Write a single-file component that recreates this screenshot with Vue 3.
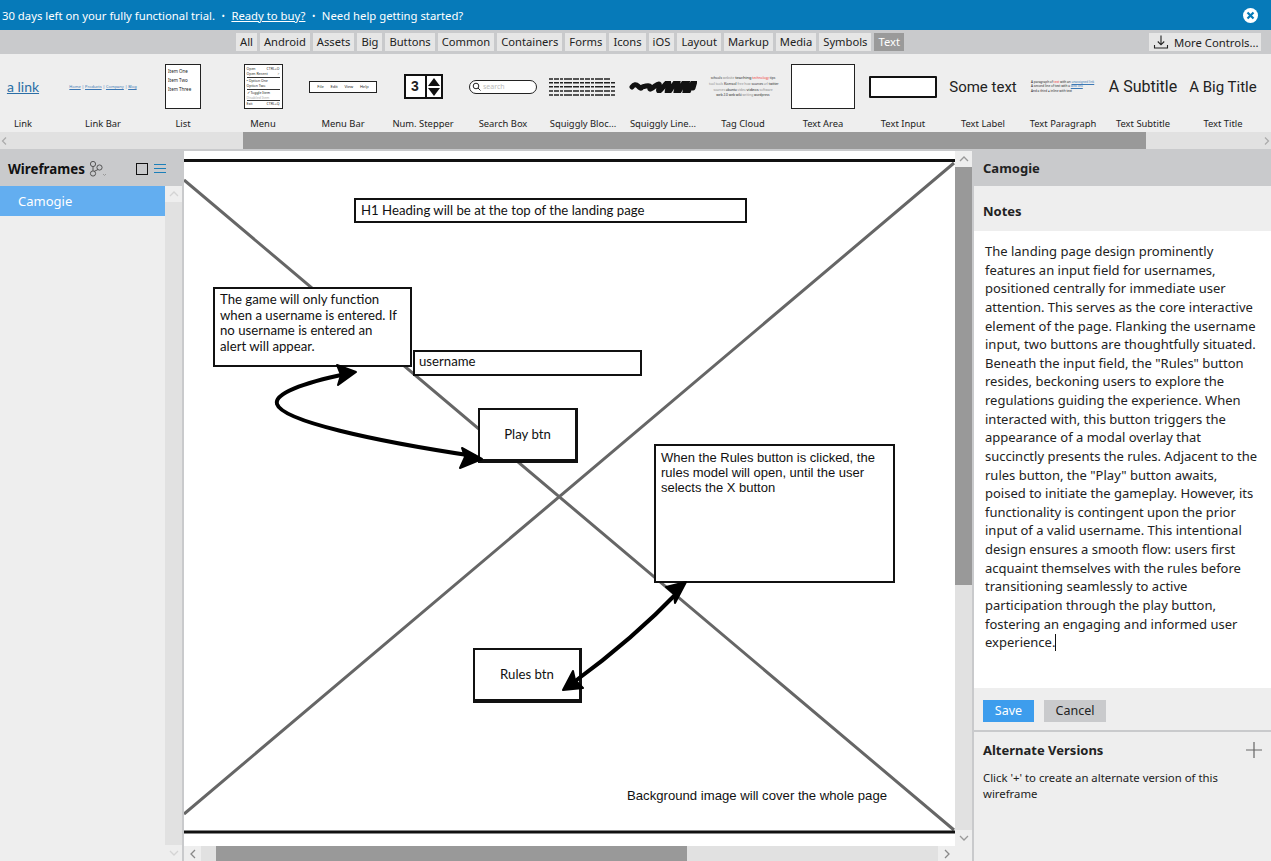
<template>
  <div class="app">
    <div class="banner">
      <span>30 days left on your fully functional trial.</span>
      <span class="dot">•</span>
      <a class="buy">Ready to buy?</a>
      <span class="dot">•</span>
      <span>Need help getting started?</span>
      <svg class="close" width="15" height="15" viewBox="0 0 15 15">
        <circle cx="7.5" cy="7.5" r="7.5" fill="#fff" />
        <path d="M4.5 4.5l6 6M10.5 4.5l-6 6" stroke="#067ab9" stroke-width="2.2" />
      </svg>
    </div>

    <div class="tabs">
      <div class="chips">
        <span v-for="t in tabs" :key="t" class="chip" :class="{ on: t === 'Text' }">{{ t }}</span>
      </div>
      <div class="more">
        <svg width="16" height="16" viewBox="0 0 16 16" fill="none" stroke="#222" stroke-width="1.1">
          <path d="M8 1.5v9M4.8 7.5L8 10.8l3.2-3.3M1.5 11v3h13v-3" />
        </svg>
        <span>More Controls...</span>
      </div>
    </div>

    <div class="gallery">
      <div class="cell">
        <div class="thumb"><span class="tlink">a link</span></div>
        <div class="name">Link</div>
      </div>
      <div class="cell">
        <div class="thumb"><span class="tlinkbar"><u>Home</u> | <u>Products</u> | <u>Company</u> | <u>Blog</u></span></div>
        <div class="name">Link Bar</div>
      </div>
      <div class="cell">
        <div class="thumb">
          <div class="tlist"><div>Item One</div><div>Item Two</div><div>Item Three</div></div>
        </div>
        <div class="name">List</div>
      </div>
      <div class="cell">
        <div class="thumb">
          <div class="tmenu">
            <div><span>Open</span><span>CTRL+O</span></div>
            <div class="rule"><span>Open Recent</span><span>&gt;</span></div>
            <div><span>• Option One</span></div>
            <div class="rule"><span>Option Two</span></div>
            <div><span>✓ Toggle Item</span></div>
            <div class="rule dim"><span>Disabled Item</span></div>
            <div><span>Exit</span><span>CTRL+Q</span></div>
          </div>
        </div>
        <div class="name">Menu</div>
      </div>
      <div class="cell">
        <div class="thumb">
          <div class="tmenubar"><span>File</span><span>Edit</span><span>View</span><span>Help</span></div>
        </div>
        <div class="name">Menu Bar</div>
      </div>
      <div class="cell">
        <div class="thumb">
          <div class="tstep">
            <span class="num">3</span>
            <svg width="14" height="20" viewBox="0 0 14 20"><path d="M7 1l6 8H1zM7 19l6-8H1z" fill="#111" /></svg>
          </div>
        </div>
        <div class="name">Num. Stepper</div>
      </div>
      <div class="cell">
        <div class="thumb">
          <div class="tsearch">
            <svg width="9" height="9" viewBox="0 0 9 9" fill="none" stroke="#222" stroke-width="1"><circle cx="4" cy="4" r="2.8" /><path d="M6 6l2.5 2.5" /></svg>
            <span>search</span>
          </div>
        </div>
        <div class="name">Search Box</div>
      </div>
      <div class="cell">
        <div class="thumb">
          <svg width="68" height="18" viewBox="0 0 68 18" fill="none" stroke="#222" stroke-width="1.4" stroke-dasharray="4 1 5 1 3 1 8 1 6 1">
            <path d="M0 1h62M0 4.700h67M0 8.700h66M0 13h66M0 17h67" />
          </svg>
        </div>
        <div class="name">Squiggly Bloc...</div>
      </div>
      <div class="cell">
        <div class="thumb">
          <svg width="68" height="12" viewBox="0 0 68 12" fill="none" stroke="#111" stroke-width="5" stroke-linecap="round">
            <path d="M3 6q3-4 6-1t3 2 5-2 4 2 5-2 4 2 5-2 4 2 5-2 4 2 5-2 4 2 4 0 3 0" />
          </svg>
        </div>
        <div class="name">Squiggly Line...</div>
      </div>
      <div class="cell">
        <div class="thumb">
          <div class="ttags">
            <div>schools <i>website</i> <b>teaching</b> <em>technology</em> tips</div>
            <div><i>tool</i> <i>tools</i> <b>Konsol</b> <i>free</i> <i>how</i> sources <i>url</i> twitter</div>
            <div><i>sources</i> ubuntu <i>video</i> <b>videos</b> <i>software</i></div>
            <div>web 2.0 web wiki <i>writing</i> wordpress</div>
          </div>
        </div>
        <div class="name">Tag Cloud</div>
      </div>
      <div class="cell">
        <div class="thumb"><div class="tarea"></div></div>
        <div class="name">Text Area</div>
      </div>
      <div class="cell">
        <div class="thumb"><div class="tinput"></div></div>
        <div class="name">Text Input</div>
      </div>
      <div class="cell">
        <div class="thumb"><span class="tbig">Some text</span></div>
        <div class="name">Text Label</div>
      </div>
      <div class="cell">
        <div class="thumb">
          <div class="tpara">
            <div>A paragraph of <em>text</em> with an <u>unassigned link</u></div>
            <div>A second line of text with a <u>web link</u></div>
            <div>And a third ● inline with text</div>
          </div>
        </div>
        <div class="name">Text Paragraph</div>
      </div>
      <div class="cell">
        <div class="thumb"><span class="tbig sub">A Subtitle</span></div>
        <div class="name">Text Subtitle</div>
      </div>
      <div class="cell">
        <div class="thumb"><span class="tbig">A Big Title</span></div>
        <div class="name">Text Title</div>
      </div>
    </div>

    <div class="hbar gallerybar">
      <svg class="arrow" width="10" height="10" viewBox="0 0 10 10"><path d="M6 1.5L2.5 5 6 8.5" fill="none" stroke="#aaa" stroke-width="1.2" /></svg>
      <div class="gap-a"></div>
      <div class="thumbbar"></div>
      <div class="gap-b"></div>
      <svg class="arrow" width="10" height="10" viewBox="0 0 10 10"><path d="M4 1.500L7.500 5 4 8.500" fill="none" stroke="#aaa" stroke-width="1.2" /></svg>
    </div>

    <div class="main">
      <aside class="left">
        <div class="lhead">
          <span class="ltitle">Wireframes</span>
          <svg class="branch" width="18" height="18" viewBox="0 0 18 18" fill="none" stroke="#555" stroke-width="1">
            <circle cx="4" cy="4" r="2.6" /><circle cx="4" cy="13.5" r="2.6" /><circle cx="10.5" cy="7.5" r="2.6" />
            <path d="M4 6.6v4.3M5 11.5L9 9.5" /><path d="M14 14l1.5 1.5L17 14" stroke="#999" />
          </svg>
          <span class="square"></span>
          <span class="burger"><i></i><i></i><i></i></span>
        </div>
        <div class="lbody">
          <div class="llist">
            <div class="litem">Camogie</div>
          </div>
          <div class="vbar">
            <div class="vbtn"><svg width="10" height="8" viewBox="0 0 10 8"><path d="M1 6l4-4 4 4" fill="none" stroke="#d4d4d4" stroke-width="1.3" /></svg></div>
            <div class="vfill"></div>
            <div class="vbtn"><svg width="10" height="8" viewBox="0 0 10 8"><path d="M1 2l4 4 4-4" fill="none" stroke="#d4d4d4" stroke-width="1.3" /></svg></div>
          </div>
        </div>
      </aside>

      <section class="center">
        <div class="upper">
          <div class="canvas">
            <svg class="drawing" width="771" height="695" viewBox="0 0 771 695" fill="none">
              <path d="M0 29L770 679M0 663L770 12" stroke="#666" stroke-width="3" />
              <path d="M0 9.500H771M0 681H771" stroke="#111" stroke-width="3" />
            </svg>

            <div class="box h1box">H1 Heading will be at the top of the landing page</div>
            <div class="box gamebox">The game will only function<br />when a username is entered. If<br />no username is entered an<br />alert will appear.</div>
            <div class="box userbox">username</div>
            <div class="box btnbox playbox">Play btn</div>
            <div class="box btnbox rulesbox">Rules btn</div>
            <div class="box notebox">When the Rules button is clicked, the<br />rules model will open, until the user<br />selects the X button</div>
            <div class="bgnote">Background image will cover the whole page</div>

            <svg class="drawing" width="771" height="695" viewBox="0 0 771 695" fill="none">
              <path d="M162 223C118 232 90 243 93 253C98 270 190 290 290 305" stroke="#000" stroke-width="4" stroke-linecap="round" />
              <path d="M172 221L153 214L157 224L154 234Z" fill="#000" stroke="#000" stroke-width="2" stroke-linejoin="round" />
              <path d="M298 308L278 297L281 306L276 317Z" fill="#000" stroke="#000" stroke-width="2" stroke-linejoin="round" />
              <path d="M390 531Q449 488 495 440" stroke="#000" stroke-width="4" />
              <path d="M502 431L482 436L490 443L491 452Z" fill="#000" stroke="#000" stroke-width="2" stroke-linejoin="round" />
              <path d="M379 539L399 537L391 529L389 520Z" fill="#000" stroke="#000" stroke-width="2" stroke-linejoin="round" />
            </svg>
          </div>
          <div class="vbar canvasbar">
            <div class="vbtn"><svg width="10" height="8" viewBox="0 0 10 8"><path d="M1 6l4-4 4 4" fill="none" stroke="#999" stroke-width="1.300" /></svg></div>
            <div class="vthumb"></div>
            <div class="vfill"></div>
            <div class="vbtn"><svg width="10" height="8" viewBox="0 0 10 8"><path d="M1 2l4 4 4-4" fill="none" stroke="#999" stroke-width="1.300" /></svg></div>
          </div>
        </div>
        <div class="hbar canvashbar">
          <div class="hbtn"><svg width="8" height="10" viewBox="0 0 8 10"><path d="M6 1L2 5l4 4" fill="none" stroke="#888" stroke-width="1.300" /></svg></div>
          <div class="h-a"></div>
          <div class="h-thumb"></div>
          <div class="h-b"></div>
          <div class="hbtn"><svg width="8" height="10" viewBox="0 0 8 10"><path d="M2 1l4 4-4 4" fill="none" stroke="#888" stroke-width="1.300" /></svg></div>
          <div class="h-corner"></div>
        </div>
      </section>

      <aside class="right">
        <div class="rhead">Camogie</div>
        <div class="notes-title">Notes</div>
        <div class="notes">
          <div v-for="(line, i) in noteLines" :key="i" class="nline">{{ line }}<span v-if="i === noteLines.length - 1" class="caret"></span></div>
        </div>
        <div class="actions">
          <span class="btn save">Save</span>
          <span class="btn cancel">Cancel</span>
        </div>
        <div class="alt">
          <div class="alt-head">
            <span>Alternate Versions</span>
            <svg width="16" height="16" viewBox="0 0 16 16"><path d="M8 0v16M0 8h16" stroke="#666" stroke-width="1.200" /></svg>
          </div>
          <p>Click '+' to create an alternate version of this<br />wireframe</p>
        </div>
      </aside>
    </div>
  </div>
</template>

<script setup>
const tabs = ['All', 'Android', 'Assets', 'Big', 'Buttons', 'Common', 'Containers', 'Forms', 'Icons', 'iOS', 'Layout', 'Markup', 'Media', 'Symbols', 'Text']

const noteLines = [
  'The landing page design prominently',
  'features an input field for usernames,',
  'positioned centrally for immediate user',
  'attention. This serves as the core interactive',
  'element of the page. Flanking the username',
  'input, two buttons are thoughtfully situated.',
  'Beneath the input field, the "Rules" button',
  'resides, beckoning users to explore the',
  'regulations guiding the experience. When',
  'interacted with, this button triggers the',
  'appearance of a modal overlay that',
  'succinctly presents the rules. Adjacent to the',
  'rules button, the "Play" button awaits,',
  'poised to initiate the gameplay. However, its',
  'functionality is contingent upon the prior',
  'input of a valid username. This intentional',
  'design ensures a smooth flow: users first',
  'acquaint themselves with the rules before',
  'transitioning seamlessly to active',
  'participation through the play button,',
  'fostering an engaging and informed user',
  'experience.'
]
</script>

<style>
html, body { margin: 0; overflow: hidden; }
</style>

<style scoped>
.app {
  width: 1271px;
  height: 861px;
  display: flex;
  flex-direction: column;
  overflow: hidden;
  font-family: "Noto Sans", "Open Sans", sans-serif;
  font-size: 11.3px;
  color: #222;
  background: #eee;
}

.banner {
  height: 30px;
  flex: none;
  background: #067ab9;
  color: #fff;
  display: flex;
  align-items: center;
  padding: 0 13px 0 2px;
  font-size: 11.3px;
}
.dot { margin: 0 6.5px; font-size: 9px; }
.buy { text-decoration: underline; }
.close { margin-left: auto; }

.tabs {
  height: 24px;
  flex: none;
  background: #c9cacc;
  position: relative;
  display: flex;
  align-items: center;
  justify-content: flex-end;
  padding-right: 10px;
}
.chips {
  position: absolute;
  left: 236px;
  top: 3px;
  display: flex;
  gap: 3px;
}
.chip {
  height: 18px;
  line-height: 18px;
  padding: 0 4px;
  background: #e6e6e6;
  font-size: 11.2px;
}
.chip.on { background: #9a9a9a; color: #fff; }
.more {
  height: 18px;
  width: 112px;
  background: #e6e6e6;
  display: flex;
  align-items: center;
  gap: 5px;
  padding-left: 4px;
  box-sizing: border-box;
}

.gallery {
  height: 78px;
  flex: none;
  background: #eee;
  display: flex;
  margin-left: -17px;
  overflow: hidden;
}
.cell {
  width: 80px;
  flex: none;
  display: flex;
  flex-direction: column;
  align-items: center;
}
.thumb {
  height: 45px;
  margin-top: 10px;
  width: 68px;
  display: flex;
  align-items: center;
  justify-content: center;
}
.name {
  margin-top: 8px;
  font-size: 9.400px;
  line-height: 14px;
  white-space: nowrap;
}
.tlink { font-family: "Lato", sans-serif; font-size: 14px; color: #2b6ea6; text-decoration: underline; }
.tlinkbar { font-size: 4px; color: #3b78b5; white-space: nowrap; }
.tlist {
  width: 36px;
  height: 45px;
  box-sizing: border-box;
  border: 1px solid #222;
  background: #fff;
  font-size: 4.500px;
  line-height: 9px;
  padding: 2px 2px;
  white-space: nowrap;
}
.tmenu {
  width: 39px;
  height: 45px;
  box-sizing: border-box;
  border: 1px solid #222;
  background: #fff;
  font-size: 3.500px;
  line-height: 5.400px;
  padding: 1px 2px;
  overflow: hidden;
}
.tmenu div { display: flex; justify-content: space-between; white-space: nowrap; }
.tmenu .rule { border-bottom: 1px solid #333; }
.tmenu .dim { color: #aaa; }
.tmenubar {
  width: 68px;
  height: 12px;
  box-sizing: border-box;
  border: 1px solid #222;
  background: #fff;
  font-size: 4px;
  display: flex;
  align-items: center;
  justify-content: space-around;
  padding: 0 4px;
}
.tstep {
  width: 39px;
  height: 25px;
  box-sizing: border-box;
  border: 2px solid #111;
  background: #fff;
  display: flex;
  align-items: center;
}
.num {
  flex: 1;
  text-align: center;
  font-family: "Liberation Sans", sans-serif;
  font-size: 14px;
  font-weight: 700;
  border-right: 2px solid #111;
  line-height: 21px;
}
.tsearch {
  width: 68px;
  height: 14px;
  box-sizing: border-box;
  border: 1.500px solid #222;
  border-radius: 7px;
  background: #fff;
  display: flex;
  align-items: center;
  gap: 2px;
  padding-left: 2px;
  font-size: 7px;
  color: #bbb;
}
.ttags {
  width: 68px;
  font-size: 3.200px;
  line-height: 5px;
  white-space: nowrap;
  text-align: center;
}
.ttags i { font-style: normal; color: #888; }
.ttags b { font-size: 4px; font-weight: 400; }
.ttags em { font-style: normal; color: #e33; }
.tarea {
  width: 64px;
  height: 45px;
  box-sizing: border-box;
  border: 1px solid #222;
  background: #fff;
}
.tinput {
  width: 68px;
  height: 22px;
  box-sizing: border-box;
  border: 2.500px solid #111;
  border-radius: 1px;
  background: #fff;
}
.tbig { font-family: "Roboto", "Liberation Sans", sans-serif; font-size: 15px; white-space: nowrap; }
.tbig.sub { font-size: 16px; }
.tpara { width: 64px; font-size: 3.100px; line-height: 4.400px; white-space: nowrap; }
.tpara em { font-style: normal; color: #e33; }
.tpara u { color: #3b78b5; }

.hbar { display: flex; flex: none; }
.gallerybar { height: 17px; background: #e1e1e1; align-items: center; border-bottom: 2px solid #c9cacc; box-sizing: content-box; }
.arrow { width: 10px; flex: none; }
.gap-a { width: 233px; flex: none; }
.thumbbar { width: 903px; height: 17px; background: #999; flex: none; }
.gap-b { flex: 1; }

.main { flex: 1; display: flex; min-height: 0; }

.left {
  width: 182px;
  flex: none;
  display: flex;
  flex-direction: column;
  border-right: 2px solid #c9cacc;
}
.lhead {
  height: 35px;
  flex: none;
  background: #c9cacc;
  display: flex;
  align-items: center;
  padding-left: 8px;
}
.ltitle { font-size: 13.300px; font-weight: 700; color: #111; }
.branch { margin-left: 4px; }
.square {
  width: 10px;
  height: 10px;
  border: 1px solid #111;
  margin-left: 29px;
}
.burger {
  margin-left: 6px;
  width: 12px;
  display: flex;
  flex-direction: column;
  gap: 3px;
}
.burger i { height: 1px; background: #1b7fb9; display: block; }
.lbody { flex: 1; display: flex; min-height: 0; }
.llist { flex: 1; background: #eee; }
.litem {
  height: 30px;
  line-height: 30px;
  background: #63aef0;
  color: #fff;
  padding-left: 18px;
  font-size: 13px;
}
.vbar {
  width: 17px;
  flex: none;
  display: flex;
  flex-direction: column;
  background: #e1e1e1;
}
.vbtn {
  height: 16px;
  flex: none;
  display: flex;
  align-items: center;
  justify-content: center;
  background: #eee;
}
.vfill { flex: 1; }
.vthumb { height: 418px; background: #999; flex: none; }

.center { width: 788px; flex: none; display: flex; flex-direction: column; }
.upper { flex: 1; display: flex; min-height: 0; }
.canvas {
  width: 771px;
  flex: none;
  position: relative;
  background: #fff;
  overflow: hidden;
  font-family: "Lato", "Open Sans", sans-serif;
  font-size: 13.200px;
  color: #111;
}
.drawing { position: absolute; left: 0; top: 0; }
.box {
  position: absolute;
  box-sizing: border-box;
  background: #fff;
  border: 2px solid #111;
  line-height: 15.600px;
}
.h1box { left: 170px; top: 47px; width: 393px; height: 25px; padding: 1px 5px; line-height: 18px; }
.gamebox { left: 29px; top: 136px; width: 199px; height: 80px; padding: 3px 5px; }
.userbox { left: 229px; top: 199px; width: 229px; height: 26px; padding: 0 4px; line-height: 19px; }
.btnbox {
  display: flex;
  align-items: center;
  justify-content: center;
  border-right-width: 3px;
  border-bottom-width: 4px;
}
.playbox { left: 294px; top: 257px; width: 100px; height: 55px; }
.rulesbox { left: 289px; top: 497px; width: 109px; height: 55px; }
.notebox {
  left: 470px;
  top: 293px;
  width: 241px;
  height: 139px;
  padding: 4px 5px;
  line-height: 15px;
  font-family: "Liberation Sans", sans-serif;
  font-size: 13px;
}
.bgnote { position: absolute; left: 443px; top: 637px; font-family: "Liberation Sans", sans-serif; font-size: 13.150px; }

.canvashbar { height: 15px; background: #e1e1e1; }
.hbtn { width: 17px; flex: none; display: flex; align-items: center; justify-content: center; background: #eee; }
.h-a { width: 15px; flex: none; }
.h-thumb { width: 471px; background: #999; flex: none; }
.h-b { flex: 1; }
.h-corner { width: 17px; flex: none; background: #eee; }

.right {
  flex: 1;
  min-width: 0;
  display: flex;
  flex-direction: column;
  background: #eee;
  border-left: 2px solid #c9cacc;
}
.rhead {
  height: 35px;
  flex: none;
  line-height: 35px;
  background: #c9cacc;
  padding-left: 9px;
  font-size: 13px;
  font-weight: 700;
}
.notes-title {
  height: 45px;
  flex: none;
  line-height: 50px;
  padding-left: 9px;
  font-size: 13px;
  font-weight: 700;
}
.notes {
  height: 457px;
  flex: none;
  box-sizing: border-box;
  background: #fff;
  padding: 11px 0 0 11px;
  font-size: 13px;
  line-height: 18.620px;
  color: #222;
}
.nline { white-space: nowrap; }
.caret { display: inline-block; width: 1px; height: 17px; background: #111; vertical-align: -4px; }
.actions {
  height: 42px;
  flex: none;
  box-sizing: border-box;
  display: flex;
  gap: 10px;
  padding: 12px 0 0 9px;
}
.btn {
  height: 22px;
  line-height: 22px;
  text-align: center;
  font-size: 12.500px;
}
.save { width: 51px; background: #3d9ded; color: #fff; }
.cancel { width: 62px; background: #c9cacc; }
.alt {
  flex: 1;
  border-top: 2px solid #c9cacc;
  padding: 8px 9px;
}
.alt-head {
  display: flex;
  align-items: center;
  justify-content: space-between;
  font-size: 13px;
  font-weight: 700;
  height: 20px;
}
.alt p { margin: 10px 0 0; font-size: 11.350px; line-height: 16px; }
</style>
